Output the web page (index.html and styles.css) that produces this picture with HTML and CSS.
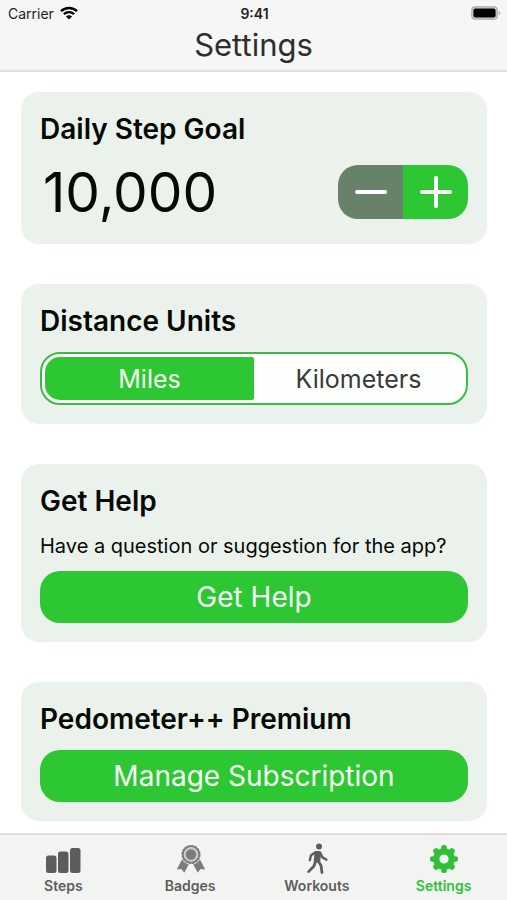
FILE: index.html
```html
<!DOCTYPE html>
<html lang="en">
<head>
<meta charset="utf-8">
<meta name="viewport" content="width=device-width, initial-scale=1">
<title>Settings</title>
<link rel="stylesheet" href="styles.css">
</head>
<body>
<div class="app">
  <header class="header">
    <div class="status">
      <div class="status-left">
        <span>Carrier</span>
        <svg class="wifi" viewBox="0 0 18 14" aria-hidden="true">
          <path d="M1 5.2a11.5 11.5 0 0 1 16 0M3.9 8.2a7.4 7.4 0 0 1 10.2 0" fill="none" stroke="currentColor" stroke-width="2.4"/>
          <path d="M9 13.6 5.9 10.6a4.4 4.4 0 0 1 6.2 0z" fill="currentColor"/>
        </svg>
      </div>
      <time class="status-time">9:41</time>
      <div class="status-right">
        <svg class="battery" viewBox="0 0 30 14" aria-hidden="true">
          <rect x=".8" y=".8" width="25.4" height="12.4" rx="3.4" fill="#d4d4d4" stroke="#a9a9a9" stroke-width="1.2"/>
          <rect x="2.4" y="2.4" width="22.2" height="9.2" rx="2" fill="#000"/>
          <path d="M27.8 4.8v4.4c1.9-.8 1.9-3.6 0-4.4z" fill="#a9a9a9"/>
        </svg>
      </div>
    </div>
    <h1 class="title">Settings</h1>
  </header>

  <main class="content">
    <section class="card card-goal">
      <h2>Daily Step Goal</h2>
      <div class="goal-row">
        <output class="goal">10,000</output>
        <div class="stepper">
          <button type="button" class="step step-down" aria-label="Decrease goal">
            <svg viewBox="0 0 32 32" aria-hidden="true"><path d="M2 16h28"/></svg>
          </button>
          <button type="button" class="step step-up" aria-label="Increase goal">
            <svg viewBox="0 0 32 32" aria-hidden="true"><path d="M2 16h28M16 2v28"/></svg>
          </button>
        </div>
      </div>
    </section>

    <section class="card">
      <h2>Distance Units</h2>
      <div class="segmented">
        <input type="radio" name="units" id="miles" checked>
        <label for="miles">Miles</label>
        <input type="radio" name="units" id="kilometers">
        <label for="kilometers">Kilometers</label>
      </div>
    </section>

    <section class="card">
      <h2>Get Help</h2>
      <p class="note">Have a question or suggestion for the app?</p>
      <button type="button" class="action">Get Help</button>
    </section>

    <section class="card">
      <h2>Pedometer++ Premium</h2>
      <button type="button" class="action">Manage Subscription</button>
    </section>
  </main>

  <nav class="tabs">
    <a href="#steps" class="tab">
      <svg viewBox="0 0 36 30" aria-hidden="true" fill="currentColor">
        <rect x="1" y="10.5" width="10.5" height="17.5" rx="2.5"/>
        <rect x="13" y="6.5" width="10.5" height="21.5" rx="2.5"/>
        <rect x="25" y="3" width="10.5" height="25" rx="2.5"/>
      </svg>
      <span>Steps</span>
    </a>
    <a href="#badges" class="tab tab-soft">
      <svg viewBox="0 0 36 30" aria-hidden="true">
        <path d="M10 14.5 4.8 24.5l4.600-.4 2.900 3.600 5.200-9.600zM28 14.5l5.200 10-4.600-.4-2.900 3.600-5.200-9.600z" fill="currentColor"/>
        <circle cx="19" cy="9.5" r="10.2" fill="#f2f4f2"/>
        <circle cx="19" cy="9.5" r="8.2" fill="none" stroke="currentColor" stroke-width="2"/>
        <circle cx="19" cy="9.5" r="9" fill="none" stroke="currentColor" stroke-width="1.2" stroke-dasharray="2.2 1.34"/>
        <circle cx="19" cy="9.5" r="7.2" fill="#c9cbc9"/>
        <circle cx="19" cy="9.5" r="5.2" fill="currentColor"/>
      </svg>
      <span>Badges</span>
    </a>
    <a href="#workouts" class="tab">
      <svg viewBox="0 0 36 30" aria-hidden="true" fill="none" stroke="currentColor" stroke-linecap="round" stroke-linejoin="round">
        <circle cx="20" cy="1.4" r="3" fill="currentColor" stroke="none"/>
        <path d="M17 7.4h3.6l-.8 8.8-3.600-.2z" fill="currentColor" stroke-width="3"/>
        <path d="M16.5 7.2 12 10.2l-1.200 5M21.2 7.8l2.300 4.600 4 2.300" stroke-width="2.4"/>
        <path d="M16.6 16 15 21l-5.400 5.600M18.800 15.500l3.200 5 1 7" stroke-width="2.8"/>
      </svg>
      <span>Workouts</span>
    </a>
    <a href="#settings" class="tab tab-active" aria-current="page">
      <svg viewBox="0 0 36 30" aria-hidden="true">
        <g fill="currentColor">
          <circle cx="18" cy="14" r="10.8"/>
          <rect x="15.2" y="0" width="5.6" height="28" rx="2.2"/>
          <rect x="15.2" y="0" width="5.6" height="28" rx="2.2" transform="rotate(45 18 14)"/>
          <rect x="15.2" y="0" width="5.6" height="28" rx="2.2" transform="rotate(90 18 14)"/>
          <rect x="15.2" y="0" width="5.6" height="28" rx="2.2" transform="rotate(135 18 14)"/>
        </g>
        <circle cx="18" cy="14" r="4.6" fill="#f2f4f2"/>
      </svg>
      <span>Settings</span>
    </a>
  </nav>
</div>
</body>
</html>
```
FILE: styles.css
```css
:root {
  --green: #2dc734;
  --card: #ebf2ec;
  --bar: #f6f6f6;
}

* {
  box-sizing: border-box;
}

body {
  margin: 0;
  background: #fff;
  color: #060906;
  font-family: Inter, "Liberation Sans", sans-serif;
}

h1, h2, p {
  margin: 0;
}

button {
  border: 0;
  padding: 0;
  font: inherit;
  color: #fff;
  cursor: pointer;
}

.app {
  display: flex;
  flex-direction: column;
  min-height: 100vh;
}

.header {
  background: var(--bar);
  border-bottom: 2px solid #e0e0e0;
  padding-bottom: 6px;
}

.status {
  display: grid;
  grid-template-columns: 1fr auto 1fr;
  align-items: center;
  height: 26px;
  padding: 0 6px 0 8px;
  font-size: 14px;
  color: #222;
}

.status-left {
  display: flex;
  align-items: center;
  gap: 6px;
}

.wifi {
  width: 18px;
  height: 14px;
  color: #000;
}

.status-time {
  font-weight: 600;
}

.status-right {
  display: flex;
  justify-content: flex-end;
}

.battery {
  width: 30px;
  height: 14px;
}

.title {
  font-size: 31px;
  line-height: 38px;
  font-weight: 400;
  text-align: center;
  color: #2e2e2e;
}

.content {
  flex: 1;
  display: flex;
  flex-direction: column;
  gap: 40px;
  padding: 20px 20px 12px 21px;
}

.card {
  background: var(--card);
  border-radius: 18px;
  padding: 19px;
}

.card-goal {
  padding-bottom: 25px;
}

.card h2 {
  margin-bottom: 12px;
  font-size: 28px;
  line-height: 37px;
  font-weight: 600;
}

.goal-row {
  display: flex;
  justify-content: space-between;
  align-items: center;
  margin-top: 17px;
}

.goal {
  padding-left: 3px;
  font-size: 55px;
  line-height: 54px;
}

.stepper {
  display: flex;
  border-radius: 20px;
  overflow: hidden;
}

.step {
  display: grid;
  place-items: center;
  width: 65px;
  height: 54px;
}

.step svg {
  width: 32px;
  height: 32px;
  fill: none;
  stroke: #fff;
  stroke-width: 4;
  stroke-linecap: round;
}

.step-down {
  background: #688269;
}

.step-up {
  background: var(--green);
}

.segmented {
  display: flex;
  height: 53px;
  padding: 3px;
  border: 2px solid #3db947;
  border-radius: 20px;
  background: #fdfffd;
}

.segmented input {
  position: absolute;
  opacity: 0;
}

.segmented label {
  flex: 1;
  display: grid;
  place-items: center;
  border-radius: 2px 15px 15px 2px;
  font-size: 25px;
  color: #3a3a3a;
  cursor: pointer;
}

.segmented label:first-of-type {
  border-radius: 15px 2px 2px 15px;
}

.segmented input:checked + label {
  background: var(--green);
  color: #f3fff3;
}

.note {
  margin-bottom: 11px;
  font-size: 20px;
  line-height: 28px;
}

.action {
  display: block;
  width: 100%;
  height: 52px;
  border-radius: 20px;
  background: var(--green);
  color: #f6fff6;
  font-size: 28px;
}

.tabs {
  position: sticky;
  bottom: 0;
  display: grid;
  grid-template-columns: repeat(4, 1fr);
  height: 67px;
  border-top: 2px solid #dcdddc;
  background: #f2f4f2;
}

.tab {
  display: flex;
  flex-direction: column;
  align-items: center;
  gap: 3px;
  padding-top: 10px;
  color: #5c5e5c;
  font-size: 14px;
  line-height: 16px;
  font-weight: 600;
  text-decoration: none;
}

.tab svg {
  width: 36px;
  height: 30px;
  overflow: visible;
}

.tab-soft svg {
  color: #7b7d7b;
}

.tab-active {
  color: #30c037;
}
```
